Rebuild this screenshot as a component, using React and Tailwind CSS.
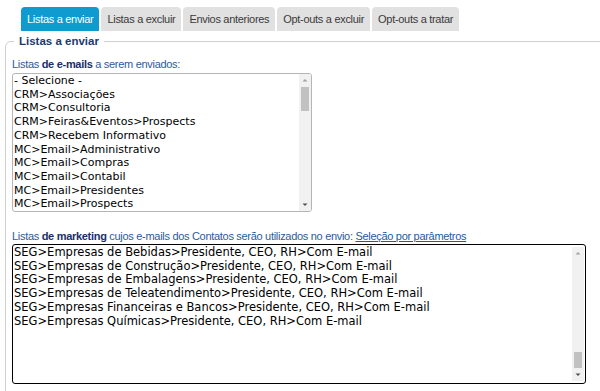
import React from 'react';

const tabs = ['Listas a enviar', 'Listas a excluir', 'Envios anteriores', 'Opt-outs a excluir', 'Opt-outs a tratar'];

const emailLists = [
  '- Selecione -',
  'CRM>Associações',
  'CRM>Consultoria',
  'CRM>Feiras&Eventos>Prospects',
  'CRM>Recebem Informativo',
  'MC>Email>Administrativo',
  'MC>Email>Compras',
  'MC>Email>Contabil',
  'MC>Email>Presidentes',
  'MC>Email>Prospects',
];

const marketingLists = [
  'SEG>Empresas de Bebidas>Presidente, CEO, RH>Com E-mail',
  'SEG>Empresas de Construção>Presidente, CEO, RH>Com E-mail',
  'SEG>Empresas de Embalagens>Presidente, CEO, RH>Com E-mail',
  'SEG>Empresas de Teleatendimento>Presidente, CEO, RH>Com E-mail',
  'SEG>Empresas Financeiras e Bancos>Presidente, CEO, RH>Com E-mail',
  'SEG>Empresas Químicas>Presidente, CEO, RH>Com E-mail',
];

const ui = "font-['Liberation_Sans',Arial,sans-serif] text-[11px] tracking-[-0.3px]";
const mono = "font-['DejaVu_Sans',Verdana,sans-serif] leading-[13.7px] text-black";

const Scrollbar = ({ thumb }) => (
  <div className="w-[12px] bg-[#f1f1f1] flex flex-col items-center">
    <svg width="12" height="12" viewBox="0 0 12 12"><path d="M3.5 7.5 L6 5 L8.5 7.5 Z" fill="#a3a3a3" /></svg>
    <div className="flex-1 w-full flex flex-col">
      {thumb === 'top' ? (
        <div className="mx-[2px] mt-[1px] h-[24px] bg-[#c1c1c1]" />
      ) : (
        <>
          <div className="flex-1" />
          <div className="mx-[2px] mb-[1px] h-[16px] bg-[#c1c1c1]" />
        </>
      )}
    </div>
    <svg width="12" height="12" viewBox="0 0 12 12"><path d="M3.5 4.5 L6 7 L8.5 4.5 Z" fill="#505050" /></svg>
  </div>
);

export default function App() {
  return (
    <div className="w-[600px] h-[391px] bg-white overflow-hidden">
      <div className={`flex gap-[2px] pl-[21px] pt-[7px] ${ui}`}>
        {tabs.map((t, i) => (
          <div
            key={t}
            className={`h-[24px] px-[6px] flex items-center rounded-t-[4px] ${
              i === 0 ? 'bg-[#0f9bd0] text-white' : 'bg-[#e1e1e1] text-[#3a3a3a]'
            }`}
          >
            {t}
          </div>
        ))}
      </div>

      <fieldset className="ml-[5px] mt-[2px] -mr-[10px] border-[1px] border-[#cfcfcf] rounded-tl-[6px] px-[6px] pb-[10px] min-w-0">
        <legend className="font-['Liberation_Sans',Arial,sans-serif] text-[11.5px] font-bold text-[#1c3a70] px-[5px] ml-[2px] leading-[16px]">
          Listas a enviar
        </legend>

        <div className={`${ui} text-[#2a5b9c] mt-[8px] leading-[14px]`}>
          Listas <b className="text-[#1a2f6a]">de e-mails</b> a serem enviados:
        </div>
        <div className="mt-[2px] w-[300px] h-[139px] border border-[#b5b5b5] rounded-[3px] flex overflow-hidden">
          <div className={`flex-1 pl-[1px] pt-[0px] text-[11px] ${mono}`}>
            {emailLists.map((l) => (
              <div key={l} className="whitespace-nowrap">{l}</div>
            ))}
          </div>
          <Scrollbar thumb="top" />
        </div>

        <div className={`${ui} text-[#2a5b9c] mt-[17px] leading-[14px]`}>
          Listas <b className="text-[#1a2f6a]">de marketing</b> cujos e-mails dos Contatos serão utilizados no envio:{' '}
          <a href="#" className="underline text-[#1a5c9e]">Seleção por parâmetros</a>
        </div>
        <div className="mt-[1px] w-[574px] h-[140px] border-[1.5px] border-black rounded-[3px] flex overflow-hidden">
          <div className={`flex-1 pl-[1px] pt-[1px] text-[11.5px] ${mono}`}>
            {marketingLists.map((l) => (
              <div key={l} className="whitespace-nowrap">{l}</div>
            ))}
          </div>
          <div className="py-[2px] pr-[1px] flex">
            <Scrollbar thumb="bottom" />
          </div>
        </div>
      </fieldset>
    </div>
  );
}
